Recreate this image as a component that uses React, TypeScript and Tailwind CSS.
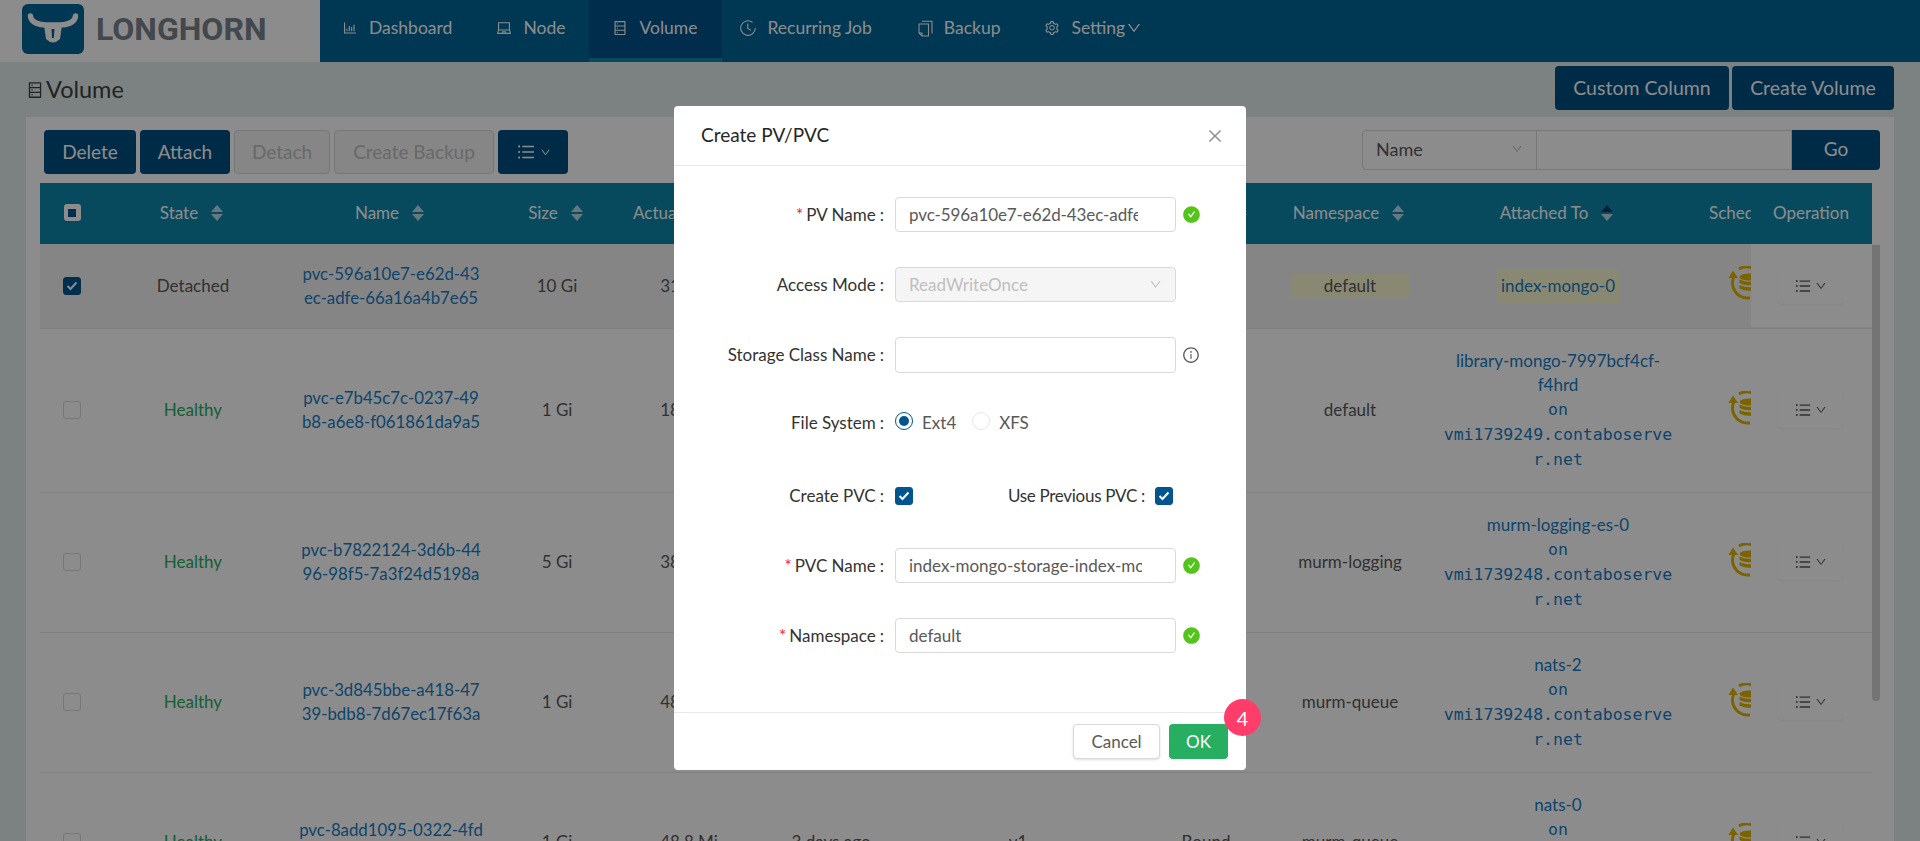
import {
  AiFillCheckCircle,
  AiOutlineBarChart,
  AiOutlineBars,
  AiOutlineClose,
  AiOutlineDatabase,
  AiOutlineDown,
  AiOutlineInfoCircle,
  AiOutlineLaptop,
  AiOutlineSetting,
} from "react-icons/ai";

const gridCols =
  "grid grid-cols-[64px_178px_218px_114px_150px_134px_240px_136px_152px_264px_61px_121px]";

const rows = [
  {
    state: "Detached",
    name: ["pvc-596a10e7-e62d-43", "ec-adfe-66a16a4b7e65"],
    size: "10 Gi",
    actual: "31.2 Mi",
    ns: "default",
    pod: ["index-mongo-0"],
    host: "",
    height: "h-[85px]",
    selected: true,
  },
  {
    state: "Healthy",
    name: ["pvc-e7b45c7c-0237-49", "b8-a6e8-f061861da9a5"],
    size: "1 Gi",
    actual: "18.3 Mi",
    ns: "default",
    pod: ["library-mongo-7997bcf4cf-", "f4hrd"],
    host: "vmi1739249.contaboserver.net",
    height: "h-[164px]",
  },
  {
    state: "Healthy",
    name: ["pvc-b7822124-3d6b-44", "96-98f5-7a3f24d5198a"],
    size: "5 Gi",
    actual: "38.5 Mi",
    ns: "murm-logging",
    pod: ["murm-logging-es-0"],
    host: "vmi1739248.contaboserver.net",
    height: "h-[140px]",
  },
  {
    state: "Healthy",
    name: ["pvc-3d845bbe-a418-47", "39-bdb8-7d67ec17f63a"],
    size: "1 Gi",
    actual: "48.8 Mi",
    ns: "murm-queue",
    pod: ["nats-2"],
    host: "vmi1739248.contaboserver.net",
    height: "h-[140px]",
  },
  {
    state: "Healthy",
    name: ["pvc-8add1095-0322-4fd", "6-9a11-3be0c47d21f8"],
    size: "1 Gi",
    actual: "48.8 Mi",
    ns: "murm-queue",
    pod: ["nats-0"],
    host: "vmi1739248.contaboserver.net",
    height: "h-[140px]",
  },
];

function Logo() {
  return (
    <svg width="62" height="50" viewBox="0 0 62 50" className="shrink-0">
      <rect width="62" height="50" rx="6" fill="#006596" />
      <path
        d="M8.5 12C9 19 18 21 24 21L38 21C44 21 53 19 53.5 12"
        fill="none"
        stroke="#fff"
        strokeWidth="5.5"
        strokeLinecap="round"
      />
      <path d="M22 21L24 35Q31 42 38 35L40 21Z" fill="#fff" />
      <path d="M29.5 25H32.5L31.8 34H30Z" fill="#006596" />
    </svg>
  );
}

function HistoryIcon() {
  return (
    <svg width="16" height="16" viewBox="0 0 16 16" fill="none" stroke="currentColor" strokeWidth="1.1">
      <path d="M12.6 2.4A7.3 7.3 0 1 0 15.3 8" />
      <path d="M7.8 3.6V8.4L11 10.4" />
    </svg>
  );
}

function PagesIcon() {
  return (
    <svg width="15" height="17" viewBox="0 0 15 17" fill="none" stroke="currentColor" strokeWidth="1.1">
      <path d="M1 4H10.5V16H4L1 13Z" />
      <path d="M4 1.2H14V13.5" />
      <path d="M4 16V13H1" />
    </svg>
  );
}

function Sorter({ active }: { active?: boolean }) {
  return (
    <span className="flex flex-col gap-[2px]">
      <span
        className={`h-0 w-0 border-x-[6px] border-b-[7px] border-x-transparent ${
          active ? "border-b-[#00396b]" : "border-b-white/70"
        }`}
      />
      <span className="h-0 w-0 border-x-[6px] border-t-[7px] border-x-transparent border-t-white/70" />
    </span>
  );
}

function HeadCell({ label, active }: { label: string; active?: boolean }) {
  return (
    <div className="flex items-center justify-center gap-[13px] pr-[3px]">
      <span className="whitespace-nowrap">{label}</span>
      <Sorter active={active} />
    </div>
  );
}

function BackupIcon() {
  return (
    <svg width="36" height="36" viewBox="-2 0 36 36" className="ml-[-3px] mt-[-3px] shrink-0 text-[#e0b400]">
      <path d="M3.8 11A15 15 0 0 0 16.5 32H20" fill="none" stroke="currentColor" strokeWidth="3" />
      <path d="M9 3A15 15 0 0 1 28 6" fill="none" stroke="currentColor" strokeWidth="3" />
      <path d="M3 4.5L-1.5 12H8Z" fill="currentColor" />
      <ellipse cx="19" cy="11" rx="9.5" ry="3.5" fill="currentColor" />
      <path d="M9.5 13.5Q19 18 28.5 13.5V17Q19 21.5 9.5 17Z" fill="currentColor" />
      <path d="M9.5 19Q19 23.5 28.5 19V22.5Q19 27 9.5 22.5Z" fill="currentColor" />
    </svg>
  );
}

function Checkbox({ checked }: { checked?: boolean }) {
  return (
    <span
      className={`flex h-[18px] w-[18px] shrink-0 items-center justify-center rounded-[3px] border ${
        checked ? "border-[#00558f] bg-[#00558f]" : "border-[#d9d9d9] bg-white"
      }`}
    >
      {checked && (
        <svg width="12" height="10" viewBox="0 0 12 10">
          <path d="M1.5 5L4.5 8L10.5 1.5" fill="none" stroke="#fff" strokeWidth="2" />
        </svg>
      )}
    </span>
  );
}

function Label({ text, required }: { text: string; required?: boolean }) {
  return (
    <span className="whitespace-nowrap text-[#333]">
      {required && <span className="mr-[3px] text-[#f5222d]">*</span>}
      {text}
      <span className="ml-[4px] mr-[2px]">:</span>
    </span>
  );
}

function FormRow({
  label,
  required,
  children,
  className,
}: {
  label: string;
  required?: boolean;
  children: React.ReactNode;
  className: string;
}) {
  return (
    <div className={`flex items-center ${className}`}>
      <div className="flex w-[212px] shrink-0 justify-end">
        <Label text={label} required={required} />
      </div>
      <div className="ml-[9px] flex items-center">{children}</div>
    </div>
  );
}

function TextInput({ value, tight }: { value: string; tight?: boolean }) {
  return (
    <input
      readOnly
      value={value}
      className={`h-[35px] w-[281px] rounded-[4px] border border-[#d9d9d9] bg-white pl-[13px] text-[#595959] outline-none ${
        tight ? "pr-[37px] tracking-[-0.1px]" : "pr-[33px]"
      }`}
    />
  );
}

function ValidIcon() {
  return <AiFillCheckCircle className="ml-[6px] text-[19px] text-[#52c41a]" />;
}

function Modal() {
  return (
    <div className="absolute left-[674px] top-[106px] flex h-[664px] w-[572px] flex-col rounded-[4px] bg-white text-[17px]">
      <div className="flex h-[60px] items-center justify-between border-b border-[#e8e8e8] pl-[27px] pr-[22px]">
        <span className="text-[19px] text-[#262626]">Create PV/PVC</span>
        <AiOutlineClose className="text-[18px] text-[#8c8c8c]" />
      </div>
      <div className="flex-1 pt-[31px]">
        <FormRow label="PV Name" required className="h-[35px]">
          <TextInput value="pvc-596a10e7-e62d-43ec-adfe-66a16a4b7e65" tight />
          <ValidIcon />
        </FormRow>
        <FormRow label="Access Mode" className="mt-[35px] h-[35px]">
          <div className="flex h-[35px] w-[281px] items-center justify-between rounded-[4px] border border-[#d9d9d9] bg-[#f5f5f5] pl-[13px] pr-[13px] text-[#bfbfbf]">
            <span>ReadWriteOnce</span>
            <AiOutlineDown className="text-[13px]" />
          </div>
        </FormRow>
        <FormRow label="Storage Class Name" className="mt-[35px] h-[36px]">
          <div className="h-[36px] w-[281px] rounded-[4px] border border-[#d9d9d9] bg-white" />
          <AiOutlineInfoCircle className="ml-[6px] text-[18px] text-[#595959]" />
        </FormRow>
        <FormRow label="File System" className="mt-[32px] h-[36px]">
          <span className="mt-[-4px] flex h-[18px] w-[18px] items-center justify-center rounded-full border border-[#00558f]">
            <span className="h-[10px] w-[10px] rounded-full bg-[#00558f]" />
          </span>
          <span className="ml-[9px] text-[#595959]">Ext4</span>
          <span className="ml-[16px] mt-[-4px] h-[18px] w-[18px] rounded-full border border-[#e8e8e8]" />
          <span className="ml-[9px] text-[#595959]">XFS</span>
        </FormRow>
        <FormRow label="Create PVC" className="mt-[37px] h-[36px]">
          <Checkbox checked />
          <span className="ml-[95px] tracking-[-0.3px]">
            <Label text="Use Previous PVC" />
          </span>
          <span className="ml-[8px]">
            <Checkbox checked />
          </span>
        </FormRow>
        <FormRow label="PVC Name" required className="mt-[34px] h-[35px]">
          <TextInput value="index-mongo-storage-index-mongo-0" />
          <ValidIcon />
        </FormRow>
        <FormRow label="Namespace" required className="mt-[35px] h-[35px]">
          <TextInput value="default" />
          <ValidIcon />
        </FormRow>
      </div>
      <div className="flex h-[58px] items-center justify-end gap-[9px] border-t border-[#e8e8e8] pr-[18px]">
        <button className="h-[35px] w-[87px] rounded-[4px] border border-[#d9d9d9] bg-white text-[#595959] shadow-sm">
          Cancel
        </button>
        <div className="relative">
          <button className="h-[35px] w-[59px] rounded-[4px] bg-[#27ae60] text-white">OK</button>
          <span className="absolute left-[55px] top-[-25px] flex h-[37px] w-[37px] items-center justify-center rounded-full bg-[#ff3d6b] text-[20px] text-white">
            4
          </span>
        </div>
      </div>
    </div>
  );
}

export default function App() {
  return (
    <div className="relative h-[841px] overflow-hidden bg-[#e2ebec] font-['Lato',sans-serif] text-[17px] text-[#595959]">
      {/* Top nav */}
      <header className="flex h-[62px]">
        <div className="flex w-[320px] items-start gap-[12px] bg-white pl-[22px] pt-[4px]">
          <Logo />
          <span className="font-['Roboto',sans-serif] text-[32px] font-bold leading-[50px] text-[#78848a]">
            LONGHORN
          </span>
        </div>
        <nav className="flex flex-1 bg-[#006596] text-[17.5px] text-white">
          <div className="flex items-center gap-[11px] pb-[6px] pl-[22px] pr-[22px]">
            <AiOutlineBarChart className="text-[16px]" />
            <span>Dashboard</span>
          </div>
          <div className="flex items-center gap-[11px] pb-[6px] pl-[22px] pr-[24px]">
            <AiOutlineLaptop className="text-[16px]" />
            <span>Node</span>
          </div>
          <div className="flex w-[133px] items-center gap-[11px] border-b-[4px] border-[#0e88ab] bg-[#00528a] pb-[2px] pl-[23px]">
            <AiOutlineDatabase className="text-[16px]" />
            <span>Volume</span>
          </div>
          <div className="flex items-center gap-[11px] pb-[6px] pl-[18px] pr-[24px]">
            <HistoryIcon />
            <span>Recurring Job</span>
          </div>
          <div className="flex items-center gap-[11px] pb-[6px] pl-[22px] pr-[22px]">
            <PagesIcon />
            <span>Backup</span>
          </div>
          <div className="flex items-center gap-[11px] pb-[6px] pl-[22px]">
            <AiOutlineSetting className="text-[16px]" />
            <span>Setting</span>
            <AiOutlineDown className="ml-[-10px] text-[16px]" />
          </div>
        </nav>
      </header>

      <main className="px-[26px]">
        {/* Title row */}
        <div className="flex h-[55px] items-start justify-between">
          <div className="flex h-[55px] items-center gap-[2px] text-[23.5px] text-[#3f3f3f]">
            <AiOutlineDatabase className="text-[18px]" />
            <span>Volume</span>
          </div>
          <div className="flex gap-[3px] pt-[4px] text-[19.5px] text-white">
            <button className="h-[44px] w-[174px] rounded-[4px] bg-[#004f82]">Custom Column</button>
            <button className="h-[44px] w-[162px] rounded-[4px] bg-[#004f82]">Create Volume</button>
          </div>
        </div>

        {/* Panel */}
        <section className="bg-white pl-[14px] pr-[14px] pt-[13px]">
          <div className="flex h-[53px] items-start justify-between pl-[4px] text-[19px]">
            <div className="flex gap-[4px]">
              <button className="h-[44px] w-[92px] rounded-[4px] bg-[#004f82] text-white">Delete</button>
              <button className="h-[44px] w-[90px] rounded-[4px] bg-[#004f82] text-white">Attach</button>
              <button className="h-[44px] w-[96px] rounded-[4px] border border-[#d9d9d9] bg-[#f5f5f5] text-[#bfbfbf]">
                Detach
              </button>
              <button className="h-[44px] w-[160px] rounded-[4px] border border-[#d9d9d9] bg-[#f5f5f5] text-[#bfbfbf]">
                Create Backup
              </button>
              <button className="flex h-[44px] w-[70px] items-center justify-center gap-[4px] rounded-[4px] bg-[#004f82] text-white">
                <AiOutlineBars className="text-[20px]" />
                <AiOutlineDown className="text-[11px]" />
              </button>
            </div>
            <div className="flex h-[40px]">
              <div className="flex w-[175px] items-center justify-between rounded-l-[4px] border border-[#d9d9d9] bg-white pb-[2px] pl-[13px] pr-[13px] text-[18px]">
                <span>Name</span>
                <AiOutlineDown className="text-[12px] text-[#bfbfbf]" />
              </div>
              <div className="w-[255px] border-y border-r border-[#d9d9d9] bg-white" />
              <button className="w-[88px] rounded-r-[4px] bg-[#004f82] pb-[2px] text-white">Go</button>
            </div>
          </div>

          <div className="flex">
            <div className="w-[1832px] shrink-0">
              {/* Table head */}
              <div className={`${gridCols} h-[61px] items-center bg-[#0e88ab] pb-[2px] text-white`}>
                <div className="flex justify-center">
                  <span className="flex h-[17px] w-[17px] items-center justify-center rounded-[3px] bg-white">
                    <span className="h-[8px] w-[8px] bg-[#00558f]" />
                  </span>
                </div>
                <HeadCell label="State" />
                <HeadCell label="Name" />
                <HeadCell label="Size" />
                <div className="overflow-hidden whitespace-nowrap pl-[19px]">Actual Size</div>
                <HeadCell label="Created" />
                <HeadCell label="Engine Image" />
                <HeadCell label="PV/PVC" />
                <HeadCell label="Namespace" />
                <HeadCell label="Attached To" active />
                <div className="overflow-hidden whitespace-nowrap pl-[19px]">Schedulable</div>
                <div className="pl-[22px]">Operation</div>
              </div>

              {/* Table rows */}
              {rows.map((row) => (
                <div
                  key={row.name[0]}
                  className={`${gridCols} ${row.height} items-center border-b border-[#e8e8e8] pb-[1px] text-center ${
                    row.selected ? "bg-[#f3f3f3]" : "bg-white"
                  }`}
                >
                  <div className="flex justify-center">
                    <Checkbox checked={row.selected} />
                  </div>
                  <div className={row.state === "Healthy" ? "text-[#27ae60]" : ""}>{row.state}</div>
                  <div className="text-[16.8px] leading-[24px] text-[#187cc4]">
                    {row.name.map((line) => (
                      <div key={line} className="whitespace-nowrap">
                        {line}
                      </div>
                    ))}
                  </div>
                  <div>{row.size}</div>
                  <div className="whitespace-nowrap">{row.actual}</div>
                  <div className="whitespace-nowrap">3 days ago</div>
                  <div>v1</div>
                  <div>Bound</div>
                  <div className="flex justify-center">
                    {row.selected ? (
                      <span className="flex h-[24px] w-[119px] items-center justify-center bg-[#fafad2]">
                        {row.ns}
                      </span>
                    ) : (
                      row.ns
                    )}
                  </div>
                  <div className="flex h-full flex-col items-center justify-center text-[#187cc4]">
                    <div className={row.selected ? "bg-[#fafad2] px-[4px] py-[5px] leading-[24px]" : "leading-[24px]"}>
                      {row.pod.map((line) => (
                        <div key={line}>{line}</div>
                      ))}
                    </div>
                    {row.host && (
                      <div className="w-[236px] break-all font-['DejaVu_Sans_Mono',monospace] text-[16.5px] leading-[25px]">
                        <div>on</div>
                        <div>{row.host}</div>
                      </div>
                    )}
                  </div>
                  <div className="flex h-full items-center overflow-hidden pl-[41px]">
                    <BackupIcon />
                  </div>
                  <div className="flex h-full items-center justify-center bg-white pr-[3px]">
                    <span className="flex h-[36px] w-[65px] items-center justify-center gap-[3px] rounded-[4px] bg-white shadow-[0_1px_2px_rgba(0,0,0,0.05)]">
                      <AiOutlineBars className="text-[18px]" />
                      <AiOutlineDown className="text-[12px]" />
                    </span>
                  </div>
                </div>
              ))}
            </div>
            {/* Scrollbar */}
            <div className="w-[8px] shrink-0 pt-[62px]">
              <div className="h-[456px] rounded-b-[4px] bg-[#d4d4d4]" />
            </div>
          </div>
        </section>
      </main>

      {/* Modal mask */}
      <div className="absolute inset-0 bg-black/45" />
      <Modal />
    </div>
  );
}
